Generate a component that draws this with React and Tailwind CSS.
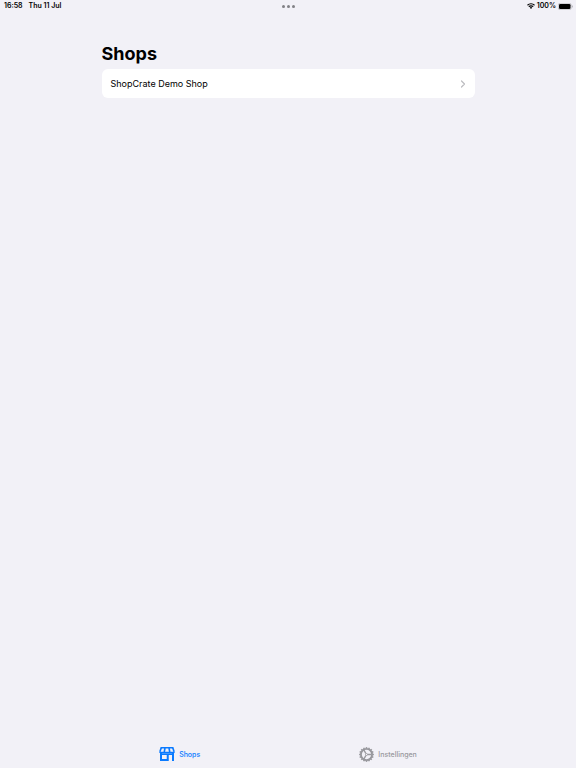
import React, { useState } from 'react'

const shops = [{ id: 1, name: 'ShopCrate Demo Shop' }]

const WifiIcon = () => (
    <svg viewBox="0 0 16 12" className="h-[6px] w-2" fill="none" stroke="#000" strokeWidth="2.4">
        <path d="M1 4.4a10 10 0 0 1 14 0" />
        <path d="M3.6 7.4a6.2 6.2 0 0 1 8.8 0" />
        <path d="M8 11.8 5.4 9.2a3.7 3.7 0 0 1 5.2 0z" fill="#000" stroke="none" />
    </svg>
)

const BatteryIcon = () => (
    <svg viewBox="0 0 30 14" className="h-[7px] w-[15px]">
        <rect x="0.5" y="0.5" width="26" height="13" rx="4" fill="none" stroke="#9c9ca1" />
        <rect x="2" y="2" width="23" height="10" rx="2.6" fill="#000" />
        <path d="M28 4.6v4.8c1.8-.8 1.8-4 0-4.8z" fill="#9c9ca1" />
    </svg>
)

const ShopIcon = () => (
    <svg viewBox="0 0 32 28" className="h-[14px] w-4" fill="none" stroke="currentColor">
        <path d="M4.5 1.6h23" strokeWidth="3.2" strokeLinecap="round" />
        <path d="M4.5 1.5 1.8 9.5M27.5 1.5l2.7 8M12 2l-1.500 8M20 2l1.500 8" strokeWidth="3.2" />
        <path d="M.3 9.500h31.400c0 2-1.500 3.300-3.700 3.300H4C1.800 12.800.3 11.500.3 9.500z" fill="currentColor" stroke="none" />
        <path d="M4 11v15h13.500V14.500M28 11v17" strokeWidth="4" />
        <path d="M4 14.500h24" strokeWidth="3" />
    </svg>
)

const teeth = Array.from({ length: 16 }, (_, i) => i * 22.5)

const GearIcon = () => (
    <svg viewBox="0 0 30 30" className="size-[15px]" fill="none" stroke="currentColor">
        <circle cx="15" cy="15" r="11.2" strokeWidth="3.8" />
        {
            teeth.map((angle) => (
                <path key={angle} d="M15 .2v3" strokeWidth="3" transform={`rotate(${angle} 15 15)`} />
            ))
        }
        <circle cx="15" cy="15" r="2" strokeWidth="1.8" />
        <path d="M17 15h8M13.8 13 9.6 5.7M13.8 17 9.6 24.3" strokeWidth="2.8" />
    </svg>
)

const StatusBar = () => (
    <header className="grid h-3 grid-cols-3 items-center px-[3px] text-[7px] leading-3 font-semibold">
        <div className="flex gap-1.5 pl-px">
            <span>16:58</span>
            <span>Thu 11 Jul</span>
        </div>
        <div className="flex justify-center gap-[2px]">
            <span className="size-[3px] rounded-full bg-[#818185]" />
            <span className="size-[3px] rounded-full bg-[#818185]" />
            <span className="size-[3px] rounded-full bg-[#818185]" />
        </div>
        <div className="flex items-center justify-end gap-[2px]">
            <WifiIcon />
            <span>100%</span>
            <BatteryIcon />
        </div>
    </header>
)

const tabs = [
    { id: 'shops', label: 'Shops', Icon: ShopIcon },
    { id: 'settings', label: 'Instellingen', Icon: GearIcon },
]

const App = () => {
    const [activeTab, setActiveTab] = useState('shops')

    return (
        <div className="flex min-h-screen flex-col bg-[#f2f1f7] font-['Inter',sans-serif] text-black">
            <StatusBar />
            <main className="mx-auto w-full max-w-[373px] grow pt-[30px]">
                <h1 className="text-[18px] leading-6 font-bold">Shops</h1>
                <ul className="mt-[3px] overflow-hidden rounded-md bg-white">
                    {
                        shops.map((shop) => (
                            <li key={shop.id}>
                                <button className="flex h-[29px] w-full items-center justify-between px-[9px] text-left text-[9px] leading-4">
                                    {shop.name}
                                    <svg viewBox="0 0 6 8" className="h-2 w-[6px]" fill="none" stroke="#bcbcc0" strokeWidth="1.2" strokeLinecap="round" strokeLinejoin="round">
                                        <path d="M1.5 1 4.5 4 1.5 7" />
                                    </svg>
                                </button>
                            </li>
                        ))
                    }
                </ul>
            </main>
            <nav className="flex justify-evenly pb-1.5">
                {
                    tabs.map(({ id, label, Icon }) => (
                        <button
                            key={id}
                            onClick={() => setActiveTab(id)}
                            className={`flex h-4 items-center gap-1 text-[7px] leading-4 font-medium ${activeTab === id ? 'text-[#0a7aff]' : 'text-[#98989d]'}`}
                        >
                            <Icon />
                            <span className="pt-px">{label}</span>
                        </button>
                    ))
                }
            </nav>
        </div>
    )
}

export default App
